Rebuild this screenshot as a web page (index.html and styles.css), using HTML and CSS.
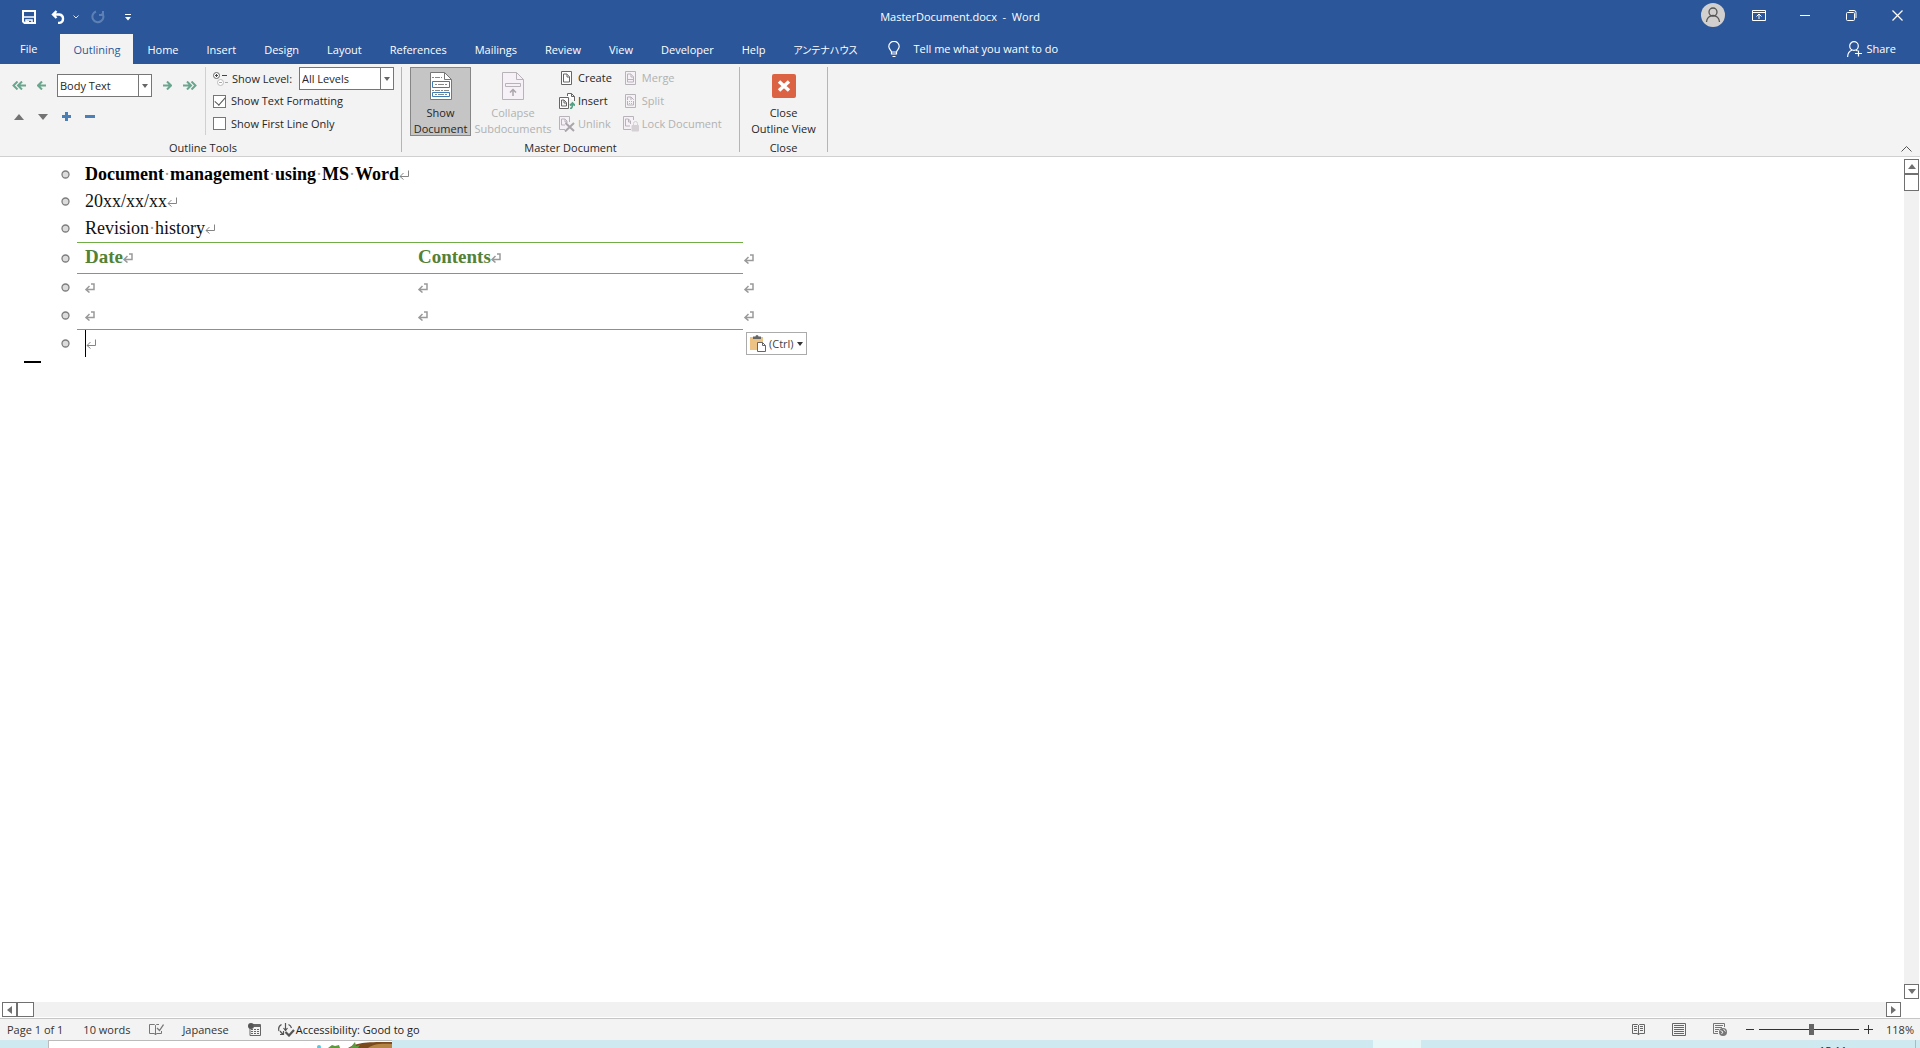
FILE: index.html
```html
<!DOCTYPE html>
<html lang="en">
<head>
<meta charset="utf-8">
<title>MasterDocument.docx - Word</title>
<link rel="stylesheet" href="styles.css">
</head>
<body>
<svg class="defs" aria-hidden="true">
  <symbol id="para" viewBox="0 0 10 10"><path d="M9.500.5v6H1M4.500 3 1 6.500l3.500 3" fill="none" stroke="#858585"/></symbol>
  <symbol id="cell" viewBox="0 0 10 10"><path d="M6 1h3v5.500H1.500M4.500 3 1 6.500l3.500 3" fill="none" stroke="#9a9a9a" stroke-width="1.500"/></symbol>
  <symbol id="dot" viewBox="0 0 9 9"><circle cx="4.500" cy="4.500" r="3.500" fill="#dcdcdc" stroke="#7d7d7d" stroke-width="1.300"/></symbol>
  <symbol id="page" viewBox="0 0 16 16"><path d="M2.500 1.500h10v13h-10z"/><path d="M4.500 4v8h6V6.500L8 4z"/><path d="M8 4v3h2.500"/></symbol>
  <symbol id="tri-down" viewBox="0 0 8 8"><path d="M1 2h6L4 6z" fill="#666"/></symbol>
</svg>
<div class="app">
  <header class="titlebar">
    <div class="quick">
      <button class="ib save" aria-label="Save"><svg width="14" height="14" viewBox="0 0 14 14"><path d="M1 1h12v12H2.500L1 11.500z" fill="none" stroke="#fff" stroke-width="2"/><path d="M1 7h12M4 14v-4h6v4" fill="none" stroke="#fff" stroke-width="1.500"/><path d="M4 11h3v3H4z" fill="#fff"/></svg></button>
      <button class="ib undo" aria-label="Undo"><svg width="15" height="14" viewBox="0 0 15 14"><path d="M5.500 1 2 4.500 5.500 8M2 4.500h6.500a4.200 4.200 0 0 1 0 8.300H7" fill="none" stroke="#fff" stroke-width="2.300"/></svg></button>
      <button class="ib undo-more" aria-label="Undo history"><svg width="6" height="4" viewBox="0 0 6 4"><path d="M.5.5 3 3 5.500.5" fill="none" stroke="#dde5f1"/></svg></button>
      <button class="ib redo" aria-label="Repeat" disabled><svg width="14" height="14" viewBox="0 0 14 14"><path d="M5 1.500a5.500 5.500 0 1 0 6 1.500M8 5h4V1" fill="none" stroke="#5f80b5" stroke-width="2"/></svg></button>
      <button class="ib custom" aria-label="Customize Quick Access Toolbar"><svg width="6" height="7" viewBox="0 0 6 7"><path d="M0 .5h6" stroke="#fff"/><path d="M0 3h6L3 6.500z" fill="#fff"/></svg></button>
    </div>
    <h1 class="title">MasterDocument.docx&nbsp; -&nbsp; Word</h1>
    <div class="window-ctl">
      <button class="ib" aria-label="Account"><svg width="24" height="24" viewBox="0 0 24 24"><circle cx="12" cy="12" r="12" fill="#d2d0ce"/><circle cx="12" cy="9" r="4" fill="none" stroke="#555" stroke-width="1.300"/><path d="M5.500 19a6.500 6.500 0 0 1 13 0" fill="none" stroke="#555" stroke-width="1.300"/></svg></button>
      <button class="ib" aria-label="Ribbon Display Options"><svg width="14" height="11" viewBox="0 0 14 11"><path d="M.5.5h13v10H.5zM.5 2.500h13M7 9V4.500M4.500 6.500 7 4l2.500 2.500" fill="none" stroke="#fff"/></svg></button>
      <button class="ib" aria-label="Minimize"><svg width="10" height="11" viewBox="0 0 10 11"><path d="M0 5.500h10" stroke="#fff"/></svg></button>
      <button class="ib" aria-label="Restore"><svg width="11" height="11" viewBox="0 0 11 11"><rect x=".5" y="2.500" width="8" height="8" rx="1" fill="none" stroke="#fff"/><path d="M3 .5h5a2 2 0 0 1 2 2V8" fill="none" stroke="#fff"/></svg></button>
      <button class="ib" aria-label="Close"><svg width="11" height="11" viewBox="0 0 11 11"><path d="M.5.5l10 10M10.500.5l-10 10" stroke="#fff" stroke-width="1.200"/></svg></button>
    </div>
  </header>

  <nav class="tabs">
    <button class="tab file">File</button>
    <button class="tab active">Outlining</button>
    <button class="tab">Home</button>
    <button class="tab">Insert</button>
    <button class="tab">Design</button>
    <button class="tab">Layout</button>
    <button class="tab">References</button>
    <button class="tab">Mailings</button>
    <button class="tab">Review</button>
    <button class="tab">View</button>
    <button class="tab">Developer</button>
    <button class="tab">Help</button>
    <button class="tab jp" lang="ja">アンテナハウス</button>
    <button class="tell"><svg width="12" height="17" viewBox="0 0 12 17"><path d="M3.500 13v-2C3 9 .8 8 .8 5.500a5.200 5.200 0 0 1 10.400 0C11.200 8 9 9 8.500 11v2zM3.500 11h5" fill="none" stroke="#fff" stroke-width="1.200"/><path d="M4.500 15.500h3" stroke="#fff"/></svg>Tell me what you want to do</button>
    <button class="share"><svg width="15" height="16" viewBox="0 0 15 16"><circle cx="7" cy="5" r="4.300" fill="none" stroke="#fff" stroke-width="1.200"/><path d="M.6 16c0-4 2-6 4.500-7M9 9l1.500 1M11.500 9.500v6M8 12.500h7" fill="none" stroke="#fff" stroke-width="1.200"/></svg>Share</button>
  </nav>

  <section class="ribbon" aria-label="Outlining">
    <div class="group outline">
      <div class="group-body">
        <div class="promote">
          <button class="ib" aria-label="Promote to Heading 1"><svg width="14" height="9" viewBox="0 0 14 9"><path d="M5.500.5 1.500 4.500l4 4M10 .5 6 4.500l4 4M6 4.500h8" fill="none" stroke="#6aa58e" stroke-width="2"/></svg></button>
          <button class="ib" aria-label="Promote"><svg width="9" height="9" viewBox="0 0 9 9"><path d="M5 .5 1 4.500l4 4M1 4.500h8" fill="none" stroke="#6aa58e" stroke-width="2"/></svg></button>
          <span class="combo"><select aria-label="Outline Level"><option>Body Text</option></select><svg width="14" height="8"><use href="#tri-down" x="3" width="8" height="8"/></svg></span>
          <button class="ib" aria-label="Demote"><svg width="9" height="9" viewBox="0 0 9 9"><path d="m4 .5 4 4-4 4M8 4.500H0" fill="none" stroke="#6aa58e" stroke-width="2"/></svg></button>
          <button class="ib" aria-label="Demote to Body Text"><svg width="14" height="9" viewBox="0 0 14 9"><path d="m8.500.5 4 4-4 4M4 .5l4 4-4 4M8 4.500H0" fill="none" stroke="#6aa58e" stroke-width="2"/></svg></button>
        </div>
        <div class="move">
          <button class="ib" aria-label="Move Up"><svg width="10" height="6" viewBox="0 0 10 6"><path d="M0 6h10L5 0z" fill="#737373"/></svg></button>
          <button class="ib" aria-label="Move Down"><svg width="10" height="6" viewBox="0 0 10 6"><path d="M0 0h10L5 6z" fill="#737373"/></svg></button>
          <button class="ib" aria-label="Expand"><svg width="9" height="9" viewBox="0 0 9 9"><path d="M4.500 0v9M0 4.500h9" stroke="#4a7fb8" stroke-width="3"/></svg></button>
          <button class="ib" aria-label="Collapse"><svg width="10" height="3"><path d="M0 1.500h10" stroke="#4a7fb8" stroke-width="3"/></svg></button>
        </div>
        <div class="show">
          <div class="show-row level"><svg width="15" height="14" viewBox="0 0 15 14"><circle cx="3.500" cy="3.500" r="3" fill="#fff" stroke="#666"/><path d="M2 3.500h3M3.500 2v3M9 3.500h5" stroke="#444"/><circle cx="7.500" cy="10.500" r="3" fill="#fff" stroke="#bbb"/><path d="M6 10.500h3M12 10.500h3" stroke="#aaa"/></svg><label for="lvl">Show Level:</label>
            <span class="combo"><select id="lvl"><option>All Levels</option></select><svg width="14" height="8"><use href="#tri-down" x="3" width="8" height="8"/></svg></span></div>
          <label class="show-row"><input type="checkbox" checked>Show Text Formatting</label>
          <label class="show-row"><input type="checkbox">Show First Line Only</label>
        </div>
      </div>
      <h2>Outline Tools</h2>
    </div>
    <div class="group master">
      <div class="group-body">
        <button class="big pressed"><svg width="22" height="28" viewBox="0 0 22 28"><path d="M.5.5h14l7 7v20H.5z" fill="#fff" stroke="#777"/><path d="M14.500.5v7h7" fill="none" stroke="#777"/><path d="M2 5.500h10M2 18.500h17" stroke="#888" stroke-dasharray="2 1 5 1"/><path d="M2.500 9.500h17v6h-17zM2.500 20.500h17v4h-17z" fill="#fff" stroke="#3e7cb8"/><path d="M5 12.500h12M5 22.500h12" stroke="#888" stroke-dasharray="2 1 6 1"/></svg><span>Show<br>Document</span></button>
        <button class="big" disabled><svg width="22" height="28" viewBox="0 0 22 28"><path d="M.5.5h14l7 7v20H.5z" fill="#f6f1f6" stroke="#b8b3b8"/><path d="M14.500.5v7h7M3.500 11.500h15v3h-15z" fill="none" stroke="#b8b3b8"/><path d="M11 24v-6M8 20.500l3-3 3 3" fill="none" stroke="#aaa5aa" stroke-width="1.500"/></svg><span>Collapse<br>Subdocuments</span></button>
        <div class="small-col">
          <button><svg class="pg" width="16" height="16"><use href="#page" width="16" height="16"/></svg>Create</button>
          <button><svg class="pg" width="16" height="16" viewBox="0 0 16 16"><path d="M.5 4.500h9v11h-9zM2.500 7v6h5V9.500L5 7zM5 7v3h2.500M8.500 3V.5h4l3 3V8M12.500.5v3h3"/><path d="M11 15.500c2 0 2.500-1 2.500-5M11 12.500l2.500-2.500L16 12.500" stroke="#53a083" stroke-width="1.800"/></svg>Insert</button>
          <button disabled><svg class="pg" width="16" height="16" viewBox="0 0 16 16"><path d="M10.500 6V.5h-10v13H6M2.500 3v6H6M2.500 3H6l2 2v2M6 3v3h2"/><path d="M6.500 7 15 15M15 7l-9 8.500" stroke="#aaa5aa" stroke-width="2"/></svg>Unlink</button>
        </div>
        <div class="small-col">
          <button disabled><svg class="pg" width="16" height="16"><use href="#page" width="16" height="16"/><path d="M5 9.500h5"/></svg>Merge</button>
          <button disabled><svg class="pg" width="16" height="16" viewBox="0 0 16 16"><path d="M2.500 1.500h10v13h-10zM4.500 7V4H8l2.500 2.500V7M8 4v3M4.500 9v3h6V9"/><path d="M4 8.500h8M6 10.500h4" stroke-dasharray="1 1"/></svg>Split</button>
          <button disabled><svg class="pg" width="16" height="16" viewBox="0 0 16 16"><path d="M10.500 4V.5H.5v13H8M2.500 3v7H7M2.500 3h3l2 2v3M5.500 3v3h2"/><path d="M9 9.500h6.500V15H9z" fill="#d4d0d4" stroke="#d4d0d4"/><path d="M10.500 9V7.500a2 2 0 0 1 4 0V9" stroke="#d4d0d4"/></svg>Lock Document</button>
        </div>
      </div>
      <h2>Master Document</h2>
    </div>
    <div class="group close">
      <div class="group-body">
        <button class="big"><svg width="24" height="28" viewBox="0 0 24 28"><rect y="2" width="24" height="24" rx="2" fill="#db6344"/><path d="m7 9.500 10 9M17 9.500l-10 9" stroke="#fff" stroke-width="3.500"/></svg><span>Close<br>Outline View</span></button>
      </div>
      <h2>Close</h2>
    </div>
    <button class="ib fold" aria-label="Collapse the Ribbon"><svg width="11" height="6" viewBox="0 0 11 6"><path d="M.5 5.500l5-5 5 5" fill="none" stroke="#555"/></svg></button>
  </section>

  <main class="work">
    <article class="doc">
      <div class="line"><svg class="bullet"><use href="#dot"/></svg><p class="heading">Document<i>·</i>management<i>·</i>using<i>·</i>MS<i>·</i>Word<svg class="mark"><use href="#para"/></svg></p></div>
      <div class="line"><svg class="bullet"><use href="#dot"/></svg><p>20xx/xx/xx<svg class="mark"><use href="#para"/></svg></p></div>
      <div class="line"><svg class="bullet"><use href="#dot"/></svg><p>Revision<i>·</i>history<svg class="mark"><use href="#para"/></svg></p></div>
      <table class="history">
        <tr class="head"><td class="gutter"><svg class="bullet"><use href="#dot"/></svg></td><th>Date<svg class="mark"><use href="#cell"/></svg></th><th>Contents<svg class="mark"><use href="#cell"/></svg></th><td class="end"><svg class="mark"><use href="#cell"/></svg></td></tr>
        <tr><td class="gutter"><svg class="bullet"><use href="#dot"/></svg></td><td><svg class="mark"><use href="#cell"/></svg></td><td><svg class="mark"><use href="#cell"/></svg></td><td class="end"><svg class="mark"><use href="#cell"/></svg></td></tr>
        <tr class="last"><td class="gutter"><svg class="bullet"><use href="#dot"/></svg></td><td><svg class="mark"><use href="#cell"/></svg></td><td><svg class="mark"><use href="#cell"/></svg></td><td class="end"><svg class="mark"><use href="#cell"/></svg></td></tr>
      </table>
      <div class="line"><svg class="bullet"><use href="#dot"/></svg><p class="caret"><svg class="mark"><use href="#para"/></svg></p>
        <button class="paste"><svg width="16" height="17" viewBox="0 0 16 17"><path d="M0 2h13v13H0z" fill="#ecc382"/><path d="M3 1.500h2.500a1.500 1.500 0 0 1 3 0H11V4H3z" fill="#666"/><path d="M7.500 7.500h5l3 3v6h-8z" fill="#fff" stroke="#666"/><path d="M12.500 7.500v3h3" fill="none" stroke="#666"/></svg>(Ctrl)<svg width="6" height="4"><path d="M0 0h6L3 4z" fill="#333"/></svg></button></div>
      <hr class="eod">
    </article>
    <div class="vscroll">
      <button class="sb" aria-label="Scroll up"><svg width="8" height="5"><path d="M0 5h8L4 0z" fill="#707070"/></svg></button>
      <div class="thumb"></div>
      <button class="sb down" aria-label="Scroll down"><svg width="8" height="5"><path d="M0 0h8L4 5z" fill="#707070"/></svg></button>
    </div>
  </main>
  <div class="hscroll">
    <button class="sb" aria-label="Scroll left"><svg width="5" height="8"><path d="M5 0v8L0 4z" fill="#707070"/></svg></button>
    <div class="thumb"></div>
    <button class="sb right" aria-label="Scroll right"><svg width="5" height="8"><path d="M0 0v8l5-4z" fill="#707070"/></svg></button>
  </div>

  <footer class="status">
    <span>Page 1 of 1</span>
    <span class="words">10 words</span>
    <button class="ib" aria-label="Proofing"><svg width="15" height="13" viewBox="0 0 15 13"><path d="M6.500 12V2.500L5.500 1.500H.5v9h5zM6.500 12l1-1.500h5V8M6.500 2.500l1-1H10" fill="none" stroke="#777"/><path d="m8 5 2.500 2.500 4-6" fill="none" stroke="#777" stroke-width="1.300"/></svg></button>
    <span class="lang">Japanese</span>
    <button class="ib macro" aria-label="Record macro"><svg width="13" height="13" viewBox="0 0 13 13"><path d="M2 4.500v8h10.500v-11H5" fill="none" stroke="#666"/><path d="M6 3h6" stroke="#666" stroke-width="2"/><circle cx="3" cy="3" r="3" fill="#555"/><path d="M3 6.500h9M3 8.500h9M3 10.500h9" stroke="#666" stroke-dasharray="2 1"/></svg></button>
    <span class="access"><svg width="17" height="14" viewBox="0 0 17 14"><path d="M3.500 1.500A5.500 5.500 0 0 0 1 8M2 11.500h3.500V8M2 8l3 3.500M7.500 0v7M5.500 5l2 2.500 2-2.500M10.500 1.500A5.500 5.500 0 0 1 13.500 5" fill="none" stroke="#555" stroke-width="1.200"/><path d="m7.500 9 3.500 3.500L16 7" fill="none" stroke="#555" stroke-width="2.200"/></svg>Accessibility: Good to go</span>
    <div class="views">
      <button class="ib" aria-label="Read Mode"><svg width="13" height="13" viewBox="0 0 13 13"><path d="M.5 1.500h5l1 1 1-1h5v9h-5l-1 1.500-1-1.500h-5zM6.500 2v10" fill="none" stroke="#666"/><path d="M2 3.500h3M2 5.500h3M2 7.500h3M8 3.500h3M8 5.500h3M8 7.500h3" stroke="#666"/></svg></button>
      <button class="ib" aria-label="Print Layout"><svg width="14" height="13" viewBox="0 0 14 13"><path d="M.5.5h13v12H.5zM2 2.500h10M2 4.500h10M2 6.500h10M2 8.500h10M2 10.500h10" fill="none" stroke="#666"/></svg></button>
      <button class="ib" aria-label="Web Layout"><svg width="14" height="13" viewBox="0 0 14 13"><path d="M11.500 4V.5H.5v10H5M2 2.500h8M2 4.500h7M2 6.500h4M2 8.500h3" fill="none" stroke="#777"/><circle cx="10" cy="9" r="4" fill="#777"/><path d="M7.500 7.500 10 9l-1.500 2M10.500 6l2 2.500" stroke="#f2f2f2" fill="none"/></svg></button>
    </div>
    <div class="zoom">
      <button class="ib" aria-label="Zoom out"><svg width="8" height="9"><path d="M0 4.500h8" stroke="#333"/></svg></button>
      <input type="range" min="0" max="100" value="53" aria-label="Zoom">
      <button class="ib" aria-label="Zoom in"><svg width="9" height="9"><path d="M0 4.500h9M4.500 0v9" stroke="#333"/></svg></button>
      <span>118%</span>
    </div>
  </footer>
  <div class="desktop">
    <div class="panel"><svg width="80" height="7" viewBox="0 0 80 7"><path d="M36 7C46 1 56 1 80 1v6z" fill="#7a4a1e"/><path d="M56 7c4-4 14-5 24-4v4z" fill="#b58545"/><path d="M16 7l4-3 3 1 4-1 1 3zM38 7l5-6 1 4 4-1-2 3z" fill="#5d9a3c"/><circle cx="7" cy="6" r="2" fill="#5ec5e0"/></svg></div>
    <div class="task"></div>
    <time>15:11</time>
  </div>
</div>
</body>
</html>
```

FILE: styles.css
```css
* { box-sizing: border-box; }
body { margin: 0; font: 11px/16px "Open Sans", "Noto Sans CJK JP", sans-serif; color: #262626; }
button, select, input { font: inherit; color: inherit; margin: 0; }
button { background: none; border: 0; padding: 0; white-space: nowrap; }
svg { display: block; flex: none; }
h1, h2, p { margin: 0; font-size: inherit; font-weight: normal; }
.defs { width: 0; height: 0; position: absolute; }
.app { min-height: 100vh; display: flex; flex-direction: column; background: #fff; }
.ib { display: flex; align-items: center; justify-content: center; }

.titlebar { height: 34px; background: #2b579a; color: #fff; display: grid; grid-template-columns: 1fr auto 1fr; align-items: center; }
.quick { display: flex; align-items: center; padding-left: 22px; }
.undo { margin-left: 15px; }
.undo-more { margin-left: 7px; }
.redo { margin-left: 12px; }
.custom { margin-left: 20px; }
.window-ctl { display: flex; justify-content: flex-end; align-self: start; padding-top: 3px; }
.window-ctl .ib { width: 46px; height: 24px; }

.tabs { height: 30px; background: #2b579a; color: #fff; display: flex; align-items: stretch; }
.tab { padding: 2px 14px 0; }
.tab.file { padding: 0 23px 0 20px; }
.tab.active { background: #f3f3f3; color: #2b579a; padding: 2px 13px 0; }
.tab.jp { font-size: 10px; font-feature-settings: "palt"; }
.tell { display: flex; align-items: center; gap: 14px; margin-left: 16px; }
.share { display: flex; align-items: center; gap: 4px; margin-left: auto; padding-right: 24px; }

.ribbon { background: #f3f3f3; border-bottom: 1px solid #d2d0ce; display: flex; padding: 3px 8px 4px 0; height: 93px; }
.group { display: flex; flex-direction: column; justify-content: space-between; border-right: 1px solid #b5b5b5; }
.group h2 { text-align: center; line-height: 9px; }
.group-body { display: flex; height: 68px; }
.outline { width: 402px; padding: 0 7px 0 12px; }
.outline .group-body { display: grid; grid-template-columns: 193px 1fr; grid-template-rows: 37px 1fr; }
.promote { display: flex; justify-content: space-between; align-items: center; width: 185px; grid-column: 1; }
.move { display: flex; align-items: center; gap: 14px; padding-left: 2px; height: 25px; }
.show { grid-column: 2; grid-row: 1 / 3; display: flex; flex-direction: column; border-left: 1px solid #d2d0ce; padding-left: 7px; }
.show-row { display: flex; align-items: center; gap: 5px; height: 23px; }
.level { gap: 4px; }
.level .combo { margin-left: auto; }
.combo { display: inline-grid; align-items: center; width: 95px; height: 23px; }
.combo select { grid-area: 1 / 1; appearance: none; width: 95px; height: 23px; border: 1px solid #767676; border-radius: 0; background: linear-gradient(90deg, transparent 80px, #767676 80px, #767676 81px, transparent 81px), #fff; padding: 0 16px 0 2px; }
.combo svg { grid-area: 1 / 1; justify-self: end; pointer-events: none; }
input[type="checkbox"] { appearance: none; width: 13px; height: 13px; border: 1px solid #767676; background: #fff; display: grid; place-items: center; }
input[type="checkbox"]:checked::before { content: ""; width: 9px; height: 5px; border: solid #555; border-width: 0 0 1px 1px; transform: translateY(-1px) rotate(-48deg); }
.master { width: 338px; }
.master .group-body { padding-left: 8px; }
.big { display: flex; flex-direction: column; align-items: center; padding: 4px 1px 0; height: 69px; border: 1px solid transparent; }
.big span { margin-top: 5px; }
.pressed { background: #c5c5c5; border-color: #868686; width: 61px; }
.big:disabled { width: 84px; }
.small-col { display: flex; flex-direction: column; padding-left: 4px; }
.small-col + .small-col { padding-left: 11px; }
.small-col button { display: flex; align-items: center; gap: 3px; height: 23px; }
.pg { fill: #fff; stroke: #666; }
button:disabled { color: #b1b1b1; }
button:disabled .pg { fill: #f6f1f6; stroke: #b8b3b8; }
.close { width: 88px; }
.close .group-body { justify-content: center; }
.fold { margin-left: auto; align-self: flex-end; }

.work { flex: 1; display: flex; justify-content: space-between; padding: 2px 1px 3px 0; }
.vscroll { width: 15px; background: #f1f1f1; display: flex; flex-direction: column; }
.sb { width: 15px; height: 15px; background: #fff; border: 1px solid #707070; display: grid; place-items: center; }
.down { margin-top: auto; }
.thumb { width: 15px; height: 17px; background: #fff; border: 1px solid #707070; }
.hscroll { display: flex; height: 15px; background: #f1f1f1; margin-right: 19px; margin-left: 2px; }
.hscroll .thumb { width: 17px; height: 15px; }
.right { margin-left: auto; }

.doc { padding-top: 2px; font-family: "Liberation Serif", serif; font-size: 18px; line-height: 27px; color: #111; }
.line { display: flex; align-items: center; height: 27px; }
.line > .bullet { margin: 0 15px 0 61px; }
.bullet { width: 9px; height: 9px; }
.mark { display: inline-block; width: 10px; height: 10px; }
.doc i { font-style: normal; font-weight: normal; color: #999; }
.heading { font-weight: bold; color: #000; }
.history { table-layout: fixed; width: 756px; border-collapse: collapse; }
.history tr { height: 28px; }
.history .head { height: 31px; }
.history td, .history th { padding: 0 0 0 8px; text-align: left; line-height: 27px; }
.history th { padding-bottom: 3px; font-size: 19px; color: #538135; border-top: 1px solid #70ad47; border-bottom: 1px solid #70ad47; width: 333px; }
.history .last td:not(.gutter):not(.end) { border-bottom: 1px solid #70ad47; }
.history .gutter { width: 77px; padding-left: 61px; }
.history .end { padding-left: 1px; }
.line > .caret { width: 661px; height: 27px; border-left: 1px solid #000; }
.paste { font: 11px/16px "Open Sans", sans-serif; display: flex; align-items: center; gap: 3px; height: 23px; padding: 0 3px; border: 1px solid #ababab; background: #fff; color: #444; }
.eod { width: 17px; height: 2px; margin: 4px 0 0 24px; border: 0; background: #000; }

.status { height: 22px; margin-top: 1px; background: #f3f3f3; border-top: 1px solid #c6c6c6; display: flex; align-items: center; padding: 0 6px 0 7px; color: #333; }
.words { margin: 0 19px 0 20px; }
.lang { margin: 0 19px 0 18px; }
.access { display: flex; align-items: center; gap: 1px; margin-left: 17px; color: #222; }
.views { display: flex; gap: 27px; margin-left: auto; }
.zoom { display: flex; align-items: center; margin-left: 19px; }
.zoom input { appearance: none; width: 100px; height: 11px; margin: 0 5px; background: linear-gradient(#333, #333) center / 100% 1px no-repeat; }
.zoom input::-webkit-slider-thumb { appearance: none; width: 5px; height: 11px; background: #666; }
.zoom span { margin-left: 13px; }

.desktop { height: 8px; overflow: hidden; background: #cee9ef; display: flex; }
.panel { width: 344px; margin-left: 48px; background: #fff; border: 1px solid #bbb; border-width: 1px 0 0 1px; display: flex; justify-content: flex-end; }
.task { width: 48px; background: #e9f6f8; margin-left: auto; }
.desktop time { margin-left: 398px; width: 97px; height: 14px; border-right: 1px solid #a5bcc2; margin-right: 4px; padding-top: 3px; }
```
